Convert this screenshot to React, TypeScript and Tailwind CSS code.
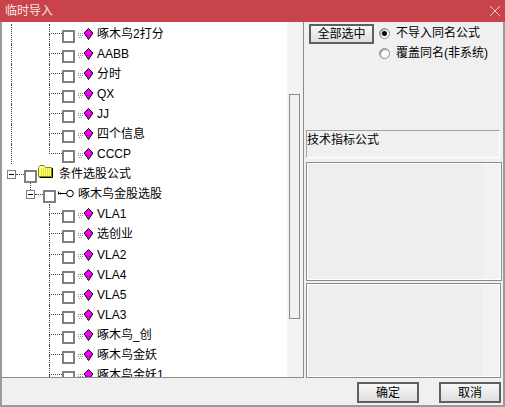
const font = "font-['Liberation_Sans','Noto_Sans_CJK_SC',sans-serif]";

type Leaf = { label: string };

const groupOne: Leaf[] = ['啄木鸟2打分', 'AABB', '分时', 'QX', 'JJ', '四个信息', 'CCCP'].map((label) => ({ label }));
const groupTwo: Leaf[] = ['VLA1', '选创业', 'VLA2', 'VLA4', 'VLA5', 'VLA3', '啄木鸟_创', '啄木鸟金妖', '啄木鸟金妖1'].map((label) => ({ label }));

function Check() {
  return <div className="w-[13px] h-[13px] shrink-0 mt-[5px] border-2 border-[#808080] bg-white" />;
}

function Minus() {
  return (
    <div className="relative w-[9px] h-[9px] shrink-0 border border-[#808080] bg-white flex items-center justify-center">
      <div className="w-[5px] h-px bg-black" />
    </div>
  );
}

function Gem() {
  return (
    <svg width="15" height="12" viewBox="0 0 15 12" className="shrink-0">
      <path d="M0 5.5h5M0 7.5h5M1 9.5h4" stroke="#8a8a8a" strokeWidth="1" strokeDasharray="1 1" />
      <path d="M10.5 .5L14.8 5L10.5 11.5L6.2 5Z" fill="#ff00ff" stroke="#000" strokeWidth="1" />
      <path d="M8.5 6.5L10.5 8L12.5 6.5" fill="none" stroke="#a000a0" strokeWidth="0.8" />
    </svg>
  );
}

function Folder() {
  return (
    <svg width="15" height="13" viewBox="0 0 15 13" className="shrink-0">
      <path d="M.5 11.5V2.5L2 .5H6L7.5 2.5H13.5V11.5Z" fill="#ffff66" stroke="#8a8a00" />
      <path d="M1 2.5H7" stroke="#fff" />
      <path d="M14.5 3V12.5H1.5" fill="none" stroke="#000" />
      <path d="M3 4h9M3 6h9M3 8h9M3 10h9" stroke="#c8c840" strokeDasharray="1 1" />
    </svg>
  );
}

function Key() {
  return (
    <svg width="16" height="9" viewBox="0 0 16 9" className="shrink-0">
      <path d="M.5 2.5V5.5M2.5 3.5V5.5M.5 4.5H9" fill="none" stroke="#000" />
      <circle cx="12" cy="4.5" r="3.3" fill="#fff" stroke="#000" />
    </svg>
  );
}

function Connector({ last }: { last?: boolean }) {
  return (
    <div className="w-[13px] shrink-0 self-stretch flex flex-col">
      <div className="h-1/2 border-l border-b border-dotted border-[#444]" />
      {!last && <div className="h-1/2 border-l border-dotted border-[#444]" />}
    </div>
  );
}

function LeafRow({ label, outer, last }: { label: string; outer?: boolean; last?: boolean }) {
  return (
    <div className="flex items-center h-[20.06px] shrink-0">
      <div className="w-[47px] shrink-0 self-stretch pl-[9px]">
        {outer && <div className="h-full border-l border-dotted border-[#444]" />}
      </div>
      <Connector last={last} />
      <Check />
      <div className="ml-[3px]">
        <Gem />
      </div>
      <span className="ml-[4px] text-black whitespace-nowrap">{label}</span>
    </div>
  );
}

function Tree() {
  return (
    <div className="flex-1 min-w-0 h-full overflow-hidden pt-[2px] bg-white">
      {groupOne.map((item, i) => (
        <LeafRow key={item.label} label={item.label} outer last={i === groupOne.length - 1} />
      ))}
      <div className="flex items-center h-[20.06px] pl-[5px]">
        <Minus />
        <div className="w-[8px] border-b border-dotted border-[#444]" />
        <Check />
        <div className="ml-px -mt-[6px]">
          <Folder />
        </div>
        <span className="ml-[6px] whitespace-nowrap">条件选股公式</span>
      </div>
      <div className="flex items-center h-[20.06px] pl-[24px]">
        <div className="relative">
          <Minus />
          <div className="absolute left-[4px] -top-[7px] h-[7px] border-l border-dotted border-[#444]" />
        </div>
        <div className="w-[8px] border-b border-dotted border-[#444]" />
        <Check />
        <div className="ml-[2px] -mt-[2px]">
          <Key />
        </div>
        <span className="ml-[4px] whitespace-nowrap">啄木鸟金股选股</span>
      </div>
      {groupTwo.map((item) => (
        <LeafRow key={item.label} label={item.label} />
      ))}
    </div>
  );
}

function Radio({ on, label }: { on?: boolean; label: string }) {
  return (
    <div className="flex items-center h-[20px]">
      <div className="w-[11px] h-[11px] rounded-full border border-[#8a8a8a] bg-white flex items-center justify-center shadow-[inset_1px_1px_1px_#999]">
        {on && <div className="w-[5px] h-[5px] rounded-full bg-black" />}
      </div>
      <span className="ml-[6px] whitespace-nowrap">{label}</span>
    </div>
  );
}

function Btn({ label, className }: { label: string; className: string }) {
  return (
    <button className={`${className} border-2 border-[#5f5f5f] bg-gradient-to-b from-[#f8f8f8] to-[#dedede] text-black flex items-center justify-center`}>
      {label}
    </button>
  );
}

function Blank({ className }: { className: string }) {
  return (
    <div className={`${className} border border-[#8c8c8c] p-px bg-white flex`}>
      <div className="flex-1 bg-[#eeeeee]" />
      <div className="w-[17px] bg-[#f3f2f0]" />
    </div>
  );
}

export default function App() {
  return (
    <div className={`${font} w-[505px] h-[407px] flex flex-col text-[12px] leading-[16px] text-black bg-[#f0f0f0] border-b-2 border-b-[#9a9a9a] overflow-hidden`}>
      <div className="h-[22px] shrink-0 bg-[#c9434a] flex items-center justify-between pl-[5px] pr-[4px]">
        <span className="text-[#fbe3e1]">临时导入</span>
        <svg width="12" height="12" viewBox="0 0 12 12">
          <path d="M1 1L11 11M11 1L1 11" stroke="#f3c9c9" strokeWidth="1" />
        </svg>
      </div>
      <div className="flex-1 min-h-0 flex border-l-2 border-l-[#9a9a9a] border-r-2 border-r-[#9a9a9a]">
        <div className="w-[302px] shrink-0 h-[356px] flex border-r border-b border-[#8c8c8c]">
          <Tree />
          <div className="w-[16px] shrink-0 bg-[#f4f3f1] pt-[72px] pl-[2px]">
            <div className="w-[11px] h-[225px] border border-[#8c8c8c] bg-[#f2f1ef]" />
          </div>
        </div>
        <div className="flex-1 min-w-0 flex flex-col pl-[2px]">
          <div className="flex h-[108px] pl-[3px] pt-[2px]">
            <Btn label="全部选中" className="w-[65px] h-[20px]" />
            <div className="ml-[5px] -mt-px">
              <Radio on label="不导入同名公式" />
              <Radio label="覆盖同名(非系统)" />
            </div>
          </div>
          <div className="h-[28px] w-[194px] border border-[#a0a0a0] border-b-white border-r-white pt-[1px]">
            技术指标公式
          </div>
          <Blank className="mt-[4px] h-[119px] w-[196px]" />
          <Blank className="mt-[2px] h-[95px] w-[195px]" />
          <div className="flex justify-end gap-[20px] pt-[4px] pr-[2px]">
            <Btn label="确定" className="w-[62px] h-[21px]" />
            <Btn label="取消" className="w-[62px] h-[21px]" />
          </div>
        </div>
      </div>
    </div>
  );
}
